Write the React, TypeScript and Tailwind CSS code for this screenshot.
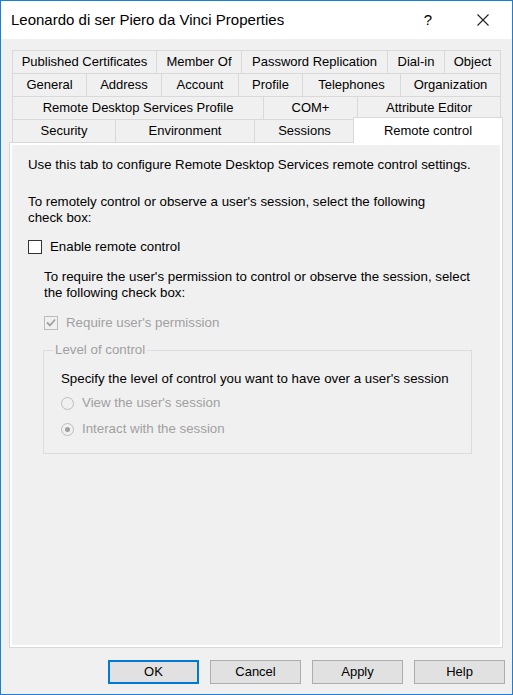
import React from 'react';

const ROWS: { label: string; w: number }[][] = [
    [
        { label: 'Published Certificates', w: 144 },
        { label: 'Member Of', w: 85 },
        { label: 'Password Replication', w: 146 },
        { label: 'Dial-in', w: 57 },
        { label: 'Object', w: 57 },
    ],
    [
        { label: 'General', w: 74 },
        { label: 'Address', w: 75 },
        { label: 'Account', w: 77 },
        { label: 'Profile', w: 64 },
        { label: 'Telephones', w: 98 },
        { label: 'Organization', w: 101 },
    ],
    [
        { label: 'Remote Desktop Services Profile', w: 251 },
        { label: 'COM+', w: 94 },
        { label: 'Attribute Editor', w: 144 },
    ],
];

const LAST_ROW = [
    { label: 'Security', w: 103 },
    { label: 'Environment', w: 139 },
    { label: 'Sessions', w: 101 },
];

const font = { fontFamily: '"Liberation Sans", Arial, sans-serif' };

const Checkbox: React.FC<{ checked?: boolean; disabled?: boolean }> = ({ checked, disabled }) => (
    <span
        className={`w-[14px] h-[14px] border flex items-center justify-center shrink-0 ${
            disabled ? 'border-[#bcbcbc] bg-[#f0f0f0]' : 'border-[#333333] bg-white'
        }`}
    >
        {checked && (
            <svg width="10" height="10" viewBox="0 0 10 10">
                <path d="M1 4.5 L4 7.5 L9 1.5" fill="none" stroke={disabled ? '#a0a0a0' : '#222'} strokeWidth="1.8" />
            </svg>
        )}
    </span>
);

const Radio: React.FC<{ checked?: boolean }> = ({ checked }) => (
    <span className="w-[13px] h-[13px] rounded-full border border-[#bcbcbc] bg-[#f0f0f0] flex items-center justify-center shrink-0">
        {checked && <span className="w-[5px] h-[5px] rounded-full bg-[#a0a0a0]" />}
    </span>
);

const Button: React.FC<{ label: string; primary?: boolean }> = ({ label, primary }) => (
    <button
        className={`w-[91px] h-[24px] bg-[#e1e1e1] text-[13px] text-black flex items-center justify-center ${
            primary ? 'border-2 border-[#0078d7]' : 'border border-[#adadad]'
        }`}
    >
        {label}
    </button>
);

export default function App() {
    return (
        <div className="w-[513px] h-[695px] border border-[#1a80d6] bg-[#f0f0f0] flex flex-col text-black" style={font}>
            {/* Title bar */}
            <div className="h-[38px] bg-white flex items-center shrink-0">
                <span className="pl-[10px] text-[15px] flex-1">Leonardo di ser Piero da Vinci Properties</span>
                <span className="w-[20px] text-[15px] text-center mr-[22px]">?</span>
                <span className="w-[46px] mr-[6px] flex items-center justify-center">
                    <svg width="12" height="12" viewBox="0 0 12 12">
                        <path d="M0.5 0.5 L11.5 11.5 M11.5 0.5 L0.5 11.5" stroke="#222" strokeWidth="1.1" />
                    </svg>
                </span>
            </div>

            {/* Body */}
            <div className="flex-1 flex flex-col pl-[8px] pr-[9px] pt-[11px]">
                {/* Tabs */}
                <div className="pl-[3px] text-[13px]">
                    {ROWS.map((row, i) => (
                        <div key={i} className="flex h-[23px]">
                            {row.map((t, j) => (
                                <div
                                    key={t.label}
                                    className={`h-[23px] border-t border-l border-[#d9d9d9] flex items-center justify-center ${
                                        j === row.length - 1 ? 'border-r' : ''
                                    }`}
                                    style={{ width: t.w }}
                                >
                                    {t.label}
                                </div>
                            ))}
                        </div>
                    ))}
                    <div className="flex h-[23px] items-end">
                        {LAST_ROW.map((t, j) => (
                            <div
                                key={t.label}
                                className={`h-[23px] border-t border-l border-[#d9d9d9] flex items-center justify-center ${
                                    j === LAST_ROW.length - 1 ? 'border-r' : ''
                                }`}
                                style={{ width: t.w }}
                            >
                                {t.label}
                            </div>
                        ))}
                        <div className="w-[150px] -ml-[2px] h-[26px] -mb-px border border-b-0 border-[#d9d9d9] bg-white flex items-start justify-center pt-[3px] relative z-10">
                            Remote control
                        </div>
                    </div>
                </div>

                {/* Panel */}
                <div className="h-[506px] border border-[#d9d9d9] bg-white p-[2px]">
                    <div className="h-full bg-[#f0f0f0] pl-[16px] pt-[12px] text-[13.3px] leading-[16px]">
                        <p>Use this tab to configure Remote Desktop Services remote control settings.</p>
                        <p className="mt-[21px]">
                            To remotely control or observe a user's session, select the following
                            <br />
                            check box:
                        </p>
                        <label className="flex items-center gap-[8px] mt-[13px]">
                            <Checkbox />
                            <span>Enable remote control</span>
                        </label>

                        <div className="pl-[16px] mt-[14px]">
                            <p>
                                To require the user's permission to control or observe the session, select
                                <br />
                                the following check box:
                            </p>
                            <label className="flex items-center gap-[8px] mt-[14px] text-[#a0a0a0]">
                                <Checkbox checked disabled />
                                <span>Require user's permission</span>
                            </label>

                            <fieldset className="mt-[11px] w-[429px] h-[112px] border border-[#dcdcdc] -ml-px px-0 pb-2">
                                <legend className="px-[2px] ml-[9px] text-[#a0a0a0]">Level of control</legend>
                                <div className="pl-[17px]">
                                    <p className="mt-[13px]">Specify the level of control you want to have over a user's session</p>
                                    <div className="flex items-center gap-[8px] mt-[8px] text-[#a0a0a0]">
                                        <Radio />
                                        <span>View the user's session</span>
                                    </div>
                                    <div className="flex items-center gap-[8px] mt-[10px] text-[#a0a0a0]">
                                        <Radio checked />
                                        <span>Interact with the session</span>
                                    </div>
                                </div>
                            </fieldset>
                        </div>
                    </div>
                </div>

                {/* Buttons */}
                <div className="flex justify-end gap-[11px] mt-[12px] -mr-[2px]">
                    <Button label="OK" primary />
                    <Button label="Cancel" />
                    <Button label="Apply" />
                    <Button label="Help" />
                </div>
            </div>
        </div>
    );
}
